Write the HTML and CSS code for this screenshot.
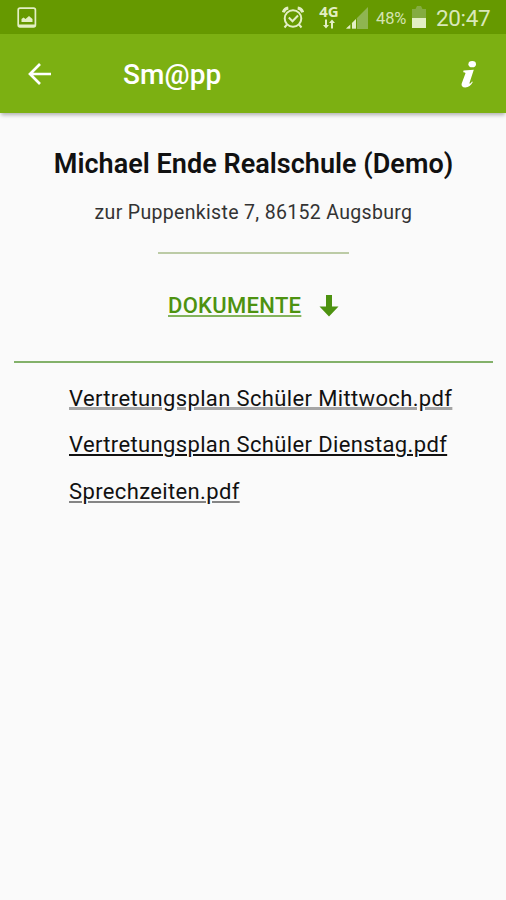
FILE: index.html
```html
<!DOCTYPE html>
<html lang="de">
<head>
<meta charset="utf-8">
<title>Sm@pp</title>
<link rel="stylesheet" href="styles.css">
</head>
<body>
<div class="status">
  <svg class="picture" width="20" height="22" viewBox="0 0 20 22"><rect x="1.2" y="1.2" width="17.2" height="18.6" rx="1.8" fill="none" stroke="currentColor" stroke-width="1.700"/><path d="M2 17.500h16v2.500H2zM4.500 15v-3l2-1.500 2 1.500 3.500-3 3.500 3v3z" fill="currentColor"/></svg>
  <svg class="alarm" width="22" height="24" viewBox="0 0 22 24"><g fill="none" stroke="currentColor" stroke-width="2"><circle cx="11" cy="12.500" r="8.300"/><path d="M6.800 11.500l3.700 3.700 5.500-5.700M5 18.500l-2.500 3M17 18.500l2.500 3"/><path d="M1.300 6.300C2 4 4 2.300 6.300 2M20.700 6.300C20 4 18 2.300 15.700 2" stroke-width="3"/></g></svg>
  <div class="network">
    <span>4G</span>
    <svg width="12" height="10" viewBox="0 0 12 10"><path d="M2 .5h2V6h2L3 9.500 0 6h2zM8 9.500h2V4h2L9 .5 6 4h2z" fill="currentColor"/></svg>
  </div>
  <svg class="signal" width="22" height="22" viewBox="0 0 22 22"><path d="M0 22L22 0v22z" fill="#8fb551"/><path d="M0 21.500l4.500-4v4zM6 21.500V16l4-4v9.500z" fill="currentColor"/><path d="M4.500 17.500L6 16v6H4.500zM10 12l1-1v11h-1z" fill="#669900"/></svg>
  <span class="percent">48%</span>
  <svg class="battery" width="14" height="22" viewBox="0 0 14 22"><path d="M0 3h3.500L5 0h4l1.500 3H14v19H0z" fill="#84ac41"/><path d="M0 12h14v10H0z" fill="currentColor"/></svg>
  <span class="clock">20:47</span>
</div>
<header class="bar">
  <svg class="back" width="23" height="22" viewBox="0 0 23 22"><path d="M12 1L2 11l10 10M2 11h21" fill="none" stroke="currentColor" stroke-width="2.700"/></svg>
  <h1 class="app">Sm@pp</h1>
  <svg class="info" width="16" height="27" viewBox="0 0 16 27"><ellipse cx="11.200" cy="3.200" rx="3.800" ry="3.100" fill="currentColor"/><path d="M2.500 9.500l10.300-.8-4.500 13.800c.8.500 2-.8 2.700-2l.8.600c-1.800 3.500-4.200 5.400-7.500 5.400-3 0-4.300-1.700-3.600-4l3.800-10.300c-.4-.8-1.200-.9-2.300-1z" fill="currentColor"/></svg>
</header>
<main>
  <h2 class="school">Michael Ende Realschule (Demo)</h2>
  <p class="address">zur Puppenkiste 7, 86152 Augsburg</p>
  <div class="short-rule"></div>
  <div class="documents">
    <a>DOKUMENTE</a>
    <svg width="20" height="22" viewBox="0 0 20 22"><path d="M7 0h6v11.500h6.500L10 21.500.5 11.500H7z" fill="currentColor"/></svg>
  </div>
  <div class="long-rule"></div>
  <ul class="files">
    <li><a class="faint">Vertretungsplan Schüler Mittwoch.pdf</a></li>
    <li><a>Vertretungsplan Schüler Dienstag.pdf</a></li>
    <li><a class="soft">Sprechzeiten.pdf</a></li>
  </ul>
</main>
</body>
</html>
```
FILE: styles.css
```css
* { box-sizing: border-box; }
body { margin: 0; height: 900px; background: #fafafa; color: #111; font-family: Roboto, sans-serif; overflow: hidden; }
svg { display: block; flex: none; }
h1, h2, p, ul { margin: 0; padding: 0; white-space: nowrap; }

.status { display: flex; align-items: flex-start; height: 34px; background: #669900; color: #e3efc4; }
.picture { margin: 7px 0 0 17px; }
.alarm { margin: 6px 0 0 245px; }
.network { display: flex; flex-direction: column; align-items: center; width: 20px; margin: 4px 0 0 15px; }
.network span { font: 700 15px/15px "Open Sans", sans-serif; }
.signal { margin: 7px 0 0 7px; }
.percent { width: 31px; margin: 8px 0 0 8px; font-size: 16.500px; line-height: 21px; letter-spacing: -0.100px; color: #d3e3b0; }
.battery { margin: 6px 0 0 5px; }
.clock { margin: 5px 0 0 10px; font-size: 22.500px; line-height: 27px; letter-spacing: -0.350px; color: #d9e8ba; }

.bar { display: flex; align-items: center; height: 79px; background: #7cb012; color: #fff; box-shadow: 0 3px 4px -1px rgba(0, 0, 0, 0.300); }
.back { margin-left: 28px; }
.app { flex: 1; margin: 3px 0 0 72px; font-size: 28px; line-height: 32px; font-weight: 500; letter-spacing: 0.100px; }
.info { margin-right: 29px; margin-top: 1px; }

.school { margin-top: 35px; padding-left: 1px; font-size: 27px; line-height: 32px; font-weight: 600; letter-spacing: 0.030px; text-align: center; }
.address { margin-top: 21px; padding-left: 1px; font-size: 19.500px; line-height: 24px; letter-spacing: 0.330px; color: #333; text-align: center; }
.short-rule { width: 191px; height: 2px; margin: 27px auto 0 158px; background: #bccba6; }
.documents { display: flex; align-items: center; margin: 37px 0 0 168px; height: 28px; color: #4d9210; font-size: 22px; font-weight: 500; letter-spacing: 0.300px; }
.documents a { width: 134px; text-decoration: underline; text-decoration-color: #83b35c; text-decoration-thickness: 2px; text-underline-offset: 2px; }
.documents svg { margin: 2px 0 0 17px; }
.long-rule { height: 2px; margin: 42px 13px 0 14px; background: #83b16a; }
.files { margin: 13px 0 0 69px; list-style: none; font-size: 22px; letter-spacing: 0.360px; }
.files li { height: 46.400px; line-height: 46px; }
.files a { text-decoration: underline; text-decoration-thickness: 2px; text-underline-offset: 2px; }
.files .soft { text-decoration-color: #858585; }
.files .faint { text-decoration-color: #a5a5a5; text-decoration-thickness: 3px; text-underline-offset: 1px; }
```
